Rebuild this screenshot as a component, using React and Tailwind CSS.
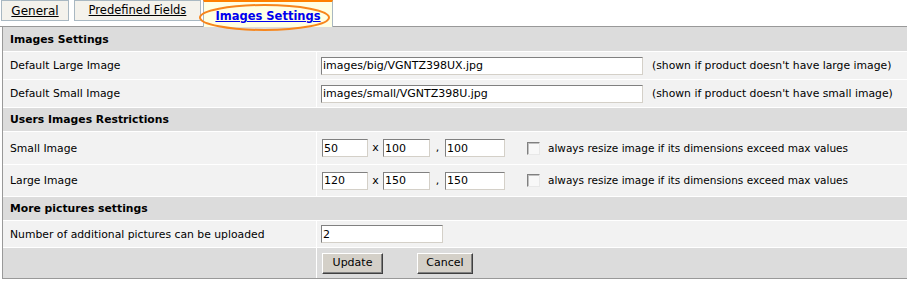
import React from "react";

const inputCls =
  "h-[18px] bg-white border border-t-[#808080] border-l-[#808080] border-b-[#d4d0c8] border-r-[#d4d0c8] px-[1px] text-[11px] font-['DejaVu_Sans',sans-serif] text-black outline-none";

function Header({ children, h = "h-[23px]" }) {
  return (
    <div className={`flex items-center bg-[#dcdcdc] pl-[7px] pt-[2px] font-bold ${h}`}>
      {children}
    </div>
  );
}

function Row({ label, h, children }) {
  return (
    <div className={`flex gap-px ${h}`}>
      <div className="w-[313px] shrink-0 bg-[#f2f2f2] flex items-center pl-[7px] pt-[2px]">
        {label}
      </div>
      <div className="flex-1 bg-[#f2f2f2] flex items-center pl-[4px]">
        {children}
      </div>
    </div>
  );
}

function Checkbox() {
  return (
    <span className="inline-block w-[13px] h-[13px] bg-[#f8f8f8] border border-t-[#808080] border-l-[#808080] border-b-[#e8e8e8] border-r-[#e8e8e8] shadow-[inset_1px_1px_0_#c0c0c0]" />
  );
}

function SizeRow({ a, b, c }) {
  return (
    <div className="flex items-center">
      <input className={`${inputCls} w-[46px] ml-[1px]`} defaultValue={a} />
      <span className="w-[15px] text-center text-[11px] pt-[1px]">x</span>
      <input className={`${inputCls} w-[47px]`} defaultValue={b} />
      <span className="w-[15px] text-center text-[11px] pt-[1px]">,</span>
      <input className={`${inputCls} w-[60px]`} defaultValue={c} />
      <span className="ml-[22px] flex">
        <Checkbox />
      </span>
      <span className="ml-[8px] text-[10.5px] pt-[1px]">
        always resize image if its dimensions exceed max values
      </span>
    </div>
  );
}

function Button({ children, w }) {
  return (
    <button
      className={`h-[21px] ${w} bg-[#d4d0c8] border border-t-white border-l-white border-b-[#404040] border-r-[#404040] shadow-[inset_-1px_-1px_0_#808080] text-[11px] font-['DejaVu_Sans',sans-serif] text-black`}
    >
      {children}
    </button>
  );
}

export default function App() {
  return (
    <div className="w-[907px] h-[281px] overflow-hidden bg-white font-['DejaVu_Sans',sans-serif] text-[10.8px] text-black">
      {/* Tabs */}
      <div className="flex h-[27px]">
        <div className="flex items-start gap-[5px] pl-[1px] border-b border-[#999999] w-[203px]">
          <div className="h-[21px] w-[68px] flex items-center justify-center bg-[#f4f2ec] border border-[#a9b8c2] text-[12px] underline">
            General
          </div>
          <div className="h-[21px] w-[127px] flex items-center justify-center bg-[#f4f2ec] border border-[#a9b8c2] text-[11.5px] underline">
            Predefined Fields
          </div>
        </div>
        <div className="relative w-[130px] bg-[#ffffe4] border-x border-[#a9b8c2] border-t-2 border-t-[#ff8000] flex items-center justify-center pt-[4px]">
          <span className="text-[11.5px] font-bold text-[#0000ee] underline">
            Images Settings
          </span>
          <svg
            className="absolute left-[-5px] top-[2px] z-10 overflow-visible"
            width="131"
            height="27"
            viewBox="0 0 131 27"
          >
            <ellipse
              cx="65.5"
              cy="13.5"
              rx="64.5"
              ry="12.5"
              fill="none"
              stroke="#f7861c"
              strokeWidth="2"
            />
          </svg>
        </div>
        <div className="flex-1 border-b border-[#999999]" />
      </div>

      {/* Panel */}
      <div className="ml-[2px] border-l border-b border-[#999999] bg-white flex flex-col gap-px">
        <Header h="h-[24px]">Images Settings</Header>
        <Row label="Default Large Image" h="h-[27px]">
          <input className={`${inputCls} w-[322px]`} defaultValue="images/big/VGNTZ398UX.jpg" />
          <span className="ml-[9px] pt-[1px]">(shown if product doesn't have large image)</span>
        </Row>
        <Row label="Default Small Image" h="h-[27px]">
          <input className={`${inputCls} w-[322px]`} defaultValue="images/small/VGNTZ398U.jpg" />
          <span className="ml-[9px] pt-[1px]">(shown if product doesn't have small image)</span>
        </Row>
        <Header>Users Images Restrictions</Header>
        <Row label="Small Image" h="h-[32px]">
          <SizeRow a="50" b="100" c="100" />
        </Row>
        <Row label="Large Image" h="h-[31px]">
          <SizeRow a="120" b="150" c="150" />
        </Row>
        <Header>More pictures settings</Header>
        <Row label="Number of additional pictures can be uploaded" h="h-[26px]">
          <input className={`${inputCls} w-[122px]`} defaultValue="2" />
        </Row>
        <div className="flex gap-px h-[30px]">
          <div className="w-[313px] shrink-0 bg-[#dcdcdc]" />
          <div className="flex-1 bg-[#dcdcdc] flex items-center pl-[5px]">
            <Button w="w-[61px]">Update</Button>
            <span className="ml-[34px] flex">
              <Button w="w-[56px]">Cancel</Button>
            </span>
          </div>
        </div>
      </div>
    </div>
  );
}
